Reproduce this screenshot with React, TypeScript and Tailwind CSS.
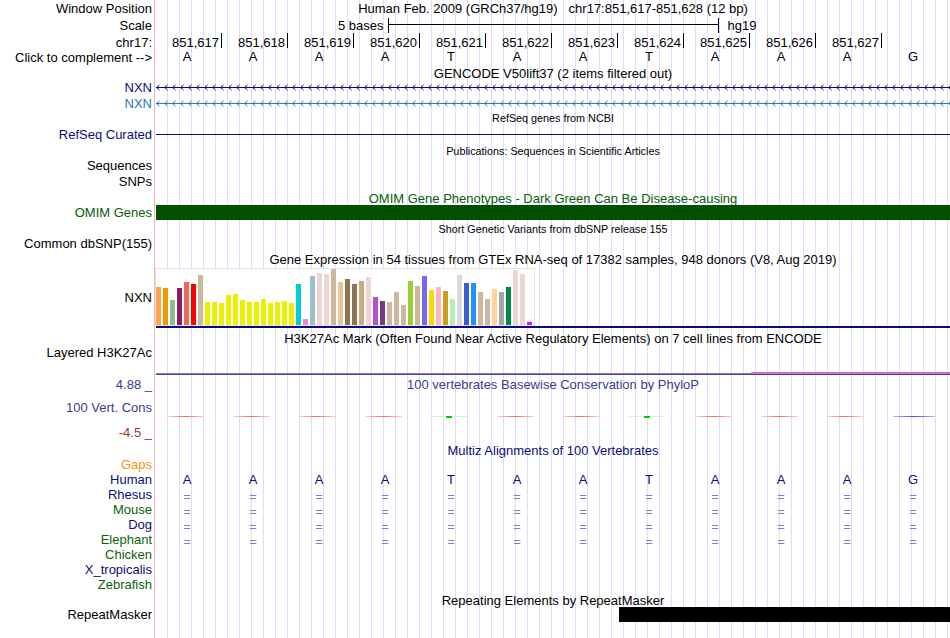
import React from "react";

const GL =
  "pl-px bg-origin-content bg-clip-content bg-[image:repeating-linear-gradient(90deg,transparent_0_11px,#dcdcfc_11px_12px)]";

const NAVY = "#0c0c78";

function Row({
  h,
  label,
  lc,
  children,
  dc,
}: {
  h: string;
  label?: React.ReactNode;
  lc?: string;
  children?: React.ReactNode;
  dc?: string;
}) {
  return (
    <div className={`flex ${h}`}>
      <div
        className={`w-[155px] shrink-0 border-r border-[#ffb4b4] pr-[2px] text-right whitespace-nowrap ${lc ?? ""}`}
      >
        {label}
      </div>
      <div className={`flex-1 min-w-0 ${GL} ${dc ?? ""}`}>{children}</div>
    </div>
  );
}

const LETTERS = ["A", "A", "A", "A", "T", "A", "A", "T", "A", "A", "A", "G"];
const POS = ["851,617", "851,618", "851,619", "851,620", "851,621", "851,622", "851,623", "851,624", "851,625", "851,626", "851,627"];

function GeneLine({ color }: { color: string }) {
  const w = 794;
  let d = `M0 7.5 H${w}`;
  for (let x = 0; x < w; x += 8) d += ` M${x + 3.5} 5 L${x + 0.5} 7.5 L${x + 3.5} 10`;
  return (
    <svg width={w} height={16} className="block">
      <path d={d} stroke={color} strokeWidth={1} fill="none" />
    </svg>
  );
}

const GTEX: [string, number][] = [
  ["#FFA54F", 38], ["#EE9A00", 37], ["#8FBC8F", 25], ["#8B1C62", 37], ["#EE6A50", 43], ["#FF0000", 41], ["#CDB79E", 50],
  ["#EEEE00", 23], ["#EEEE00", 23], ["#EEEE00", 22], ["#EEEE00", 30], ["#EEEE00", 31], ["#EEEE00", 25], ["#EEEE00", 23],
  ["#EEEE00", 23], ["#EEEE00", 26], ["#EEEE00", 22], ["#EEEE00", 23], ["#EEEE00", 24], ["#EEEE00", 22],
  ["#00CED1", 41], ["#EE82EE", 6], ["#9AC0CD", 49], ["#EED5D2", 52], ["#EED5D2", 51], ["#CDB79E", 56], ["#EEC591", 43],
  ["#8B7355", 46], ["#8B7355", 41], ["#CDAA7D", 44], ["#EED5D2", 48], ["#B452CD", 28], ["#7A378B", 24], ["#CDB79E", 23],
  ["#CDB79E", 33], ["#CDB79E", 20], ["#9ACD32", 44], ["#CDB79E", 39], ["#7A67EE", 49], ["#FFD700", 35], ["#FFB6C1", 38],
  ["#CD9B1D", 34], ["#B4EEB4", 26], ["#D9D9D9", 50], ["#3A5FCD", 42], ["#1E90FF", 42], ["#CDB79E", 33], ["#CDB79E", 26],
  ["#FFD39B", 36], ["#A6A6A6", 33], ["#008B45", 38], ["#EED5D2", 55], ["#EED5D2", 51], ["#FF00FF", 3],
];

const CONS = ["r", "r", "r", "r", "g", "r", "r", "g", "r", "r", "r", "b"];

function Dash({ k }: { k: string }) {
  if (k === "g")
    return (
      <div className="w-[36px] h-px bg-[#d2f6d2] flex justify-center items-center">
        <div className="w-[6px] h-[2px] bg-[#00cc00]" />
      </div>
    );
  if (k === "b")
    return <div className="w-[42px] h-px bg-[image:linear-gradient(90deg,#b8b8ff,#4848ff,#b8b8ff)]" />;
  return <div className="w-[37px] h-px bg-[image:linear-gradient(90deg,#ffd0d0,#ff6464,#ffd0d0)]" />;
}

function Eq() {
  return (
    <div className="-ml-[2px] grid grid-cols-[repeat(12,66px)]">
      {LETTERS.map((_, i) => (
        <div key={i} className="text-center text-[#8080c4] pt-[2px]">
          =
        </div>
      ))}
    </div>
  );
}

export default function App() {
  return (
    <div className="w-[950px] h-[638px] overflow-hidden bg-white text-black text-[13px] leading-[15px] font-['Liberation_Sans',Arial,sans-serif]">
      {/* Window position */}
      <Row h="h-[17px]" label="Window Position" lc="pt-px">
        <div className="pt-px text-center whitespace-nowrap">
          Human Feb. 2009 (GRCh37/hg19)<span className="ml-[11px]">chr17:851,617-851,628 (12 bp)</span>
        </div>
      </Row>
      {/* Scale */}
      <Row h="h-[16px]" label="Scale" lc="pt-px">
        <div className="grid grid-cols-[1fr_331px_1fr] items-start whitespace-nowrap">
          <div className="text-right pr-[4px] pt-px">5 bases</div>
          <div className="mt-px h-[15px] border-x border-black pt-[6px]">
            <div className="h-px w-full bg-black" />
          </div>
          <div className="pl-[9px] pt-px">hg19</div>
        </div>
      </Row>
      {/* chr17 ruler */}
      <Row h="h-[16px]" label="chr17:" lc="pt-[2px]">
        <div className="-ml-[2px] grid grid-cols-[repeat(12,66px)]">
          {LETTERS.map((_, i) => (
            <div key={i} className="flex justify-end">
              {i < 11 && (
                <div className="flex items-start -mr-[2px]">
                  <span className="pt-[2px] mr-[2px]">{POS[i]}</span>
                  <span className="w-px h-[15px] bg-black" />
                </div>
              )}
            </div>
          ))}
        </div>
      </Row>
      {/* bases */}
      <Row h="h-[16px]" label="Click to complement -->" lc="pt-px">
        <div className="-ml-[2px] grid grid-cols-[repeat(12,66px)]">
          {LETTERS.map((l, i) => (
            <div key={i} className="text-center">
              {l}
            </div>
          ))}
        </div>
      </Row>
      <Row h="h-[15px]">
        <div className="pt-px text-center whitespace-nowrap">GENCODE V50lift37 (2 items filtered out)</div>
      </Row>
      <Row h="h-[16px]" label="NXN" lc="text-[#0c0c78]">
        <GeneLine color={NAVY} />
      </Row>
      <Row h="h-[15px]" label="NXN" lc="text-[#2a78b4]">
        <GeneLine color="#2a78b4" />
      </Row>
      <Row h="h-[15px]">
        <div className="pt-px text-center text-[10.8px] leading-[13px] whitespace-nowrap">RefSeq genes from NCBI</div>
      </Row>
      <Row h="h-[16px]" label="RefSeq Curated" lc="pt-px text-[#0c0c78]">
        <div className="mt-[8px] h-px bg-[#0c0c78]" />
      </Row>
      <Row h="h-[16px]">
        <div className="pt-[3px] text-center text-[10.8px] leading-[13px] whitespace-nowrap">
          Publications: Sequences in Scientific Articles
        </div>
      </Row>
      <Row h="h-[16px]" label="Sequences" />
      <Row h="h-[17px]" label="SNPs" />
      <Row h="h-[14px]">
        <div className="text-center text-[#0b5c0b] whitespace-nowrap">
          OMIM Gene Phenotypes - Dark Green Can Be Disease-causing
        </div>
      </Row>
      <Row h="h-[15px]" label="OMIM Genes" lc="text-[#0b5c0b]">
        <div className="h-[15px] bg-[#005000]" />
      </Row>
      <Row h="h-[16px]">
        <div className="pt-[3px] text-center text-[10.8px] leading-[13px] whitespace-nowrap">
          Short Genetic Variants from dbSNP release 155
        </div>
      </Row>
      <Row h="h-[16px]" label="Common dbSNP(155)" />
      <Row h="h-[16px]">
        <div className="text-center whitespace-nowrap">
          Gene Expression in 54 tissues from GTEx RNA-seq of 17382 samples, 948 donors (V8, Aug 2019)
        </div>
      </Row>
      {/* GTEx graph */}
      <Row h="h-[60px]" label="NXN" lc="pt-[22px]">
        <div className="flex flex-col">
          <div className="-ml-px w-[380px] h-[58px] border border-[#e4e4e4] bg-white flex items-end gap-[2px] pr-[2px]">
            {GTEX.map(([c, h], i) => (
              <div key={i} className="w-[5px] shrink-0" style={{ height: Math.min(h, 56), backgroundColor: c }} />
            ))}
          </div>
          <div className="h-[2px] bg-[#0c0c78]" />
        </div>
      </Row>
      <Row h="h-[17px]">
        <div className="pt-[3px] text-center whitespace-nowrap">
          H3K27Ac Mark (Often Found Near Active Regulatory Elements) on 7 cell lines from ENCODE
        </div>
      </Row>
      <Row h="h-[27px]" label="Layered H3K27Ac" />
      <Row h="h-[3px]">
        <div className="flex h-[3px]">
          <div className="w-[595px] flex flex-col">
            <div className="h-px" />
            <div className="h-px bg-[#9a72cc]" />
            <div className="h-px bg-[#50408f]" />
          </div>
          <div className="flex-1 flex flex-col">
            <div className="h-[2px] bg-[#d46ad6]" />
            <div className="h-px bg-[#50408f]" />
          </div>
        </div>
      </Row>
      <Row h="h-[25px]" label="4.88 _" lc="pt-[2px] text-[#3c3c8c]">
        <div className="pt-[2px] text-center text-[#3c3c8c] whitespace-nowrap">
          100 vertebrates Basewise Conservation by PhyloP
        </div>
      </Row>
      <Row h="h-[25px]" label="100 Vert. Cons" lc="text-[#3c3c8c]">
        <div className="-ml-[2px] grid grid-cols-[repeat(12,66px)]">
          {CONS.map((k, i) => (
            <div key={i} className="pt-[16px] pl-[13px]">
              <Dash k={k} />
            </div>
          ))}
        </div>
      </Row>
      <Row h="h-[18px]" label="-4.5 _" lc="text-[#8c3c3c]" />
      <Row h="h-[14px]">
        <div className="text-center text-[#0c0c78] whitespace-nowrap">Multiz Alignments of 100 Vertebrates</div>
      </Row>
      <Row h="h-[15px]" label="Gaps" lc="text-[#f29418]" />
      <Row h="h-[15px]" label="Human" lc="text-[#0c0c78]">
        <div className="-ml-[2px] grid grid-cols-[repeat(12,66px)] text-[#0c0c78]">
          {LETTERS.map((l, i) => (
            <div key={i} className="text-center">
              {l}
            </div>
          ))}
        </div>
      </Row>
      <Row h="h-[15px]" label="Rhesus" lc="text-[#0c0c78]">
        <Eq />
      </Row>
      <Row h="h-[15px]" label="Mouse" lc="text-[#0a640a]">
        <Eq />
      </Row>
      <Row h="h-[15px]" label="Dog" lc="text-[#0c0c78]">
        <Eq />
      </Row>
      <Row h="h-[15px]" label="Elephant" lc="text-[#0a640a]">
        <Eq />
      </Row>
      <Row h="h-[15px]" label="Chicken" lc="text-[#0a640a]" />
      <Row h="h-[15px]" label="X_tropicalis" lc="text-[#0c0c78]" />
      <Row h="h-[16px]" label="Zebrafish" lc="text-[#0a640a]" />
      <Row h="h-[14px]">
        <div className="text-center whitespace-nowrap">Repeating Elements by RepeatMasker</div>
      </Row>
      <Row h="h-[15px]" label="RepeatMasker">
        <div className="ml-[463px] h-[15px] bg-black" />
      </Row>
      <Row h="h-[16px]" />
    </div>
  );
}
